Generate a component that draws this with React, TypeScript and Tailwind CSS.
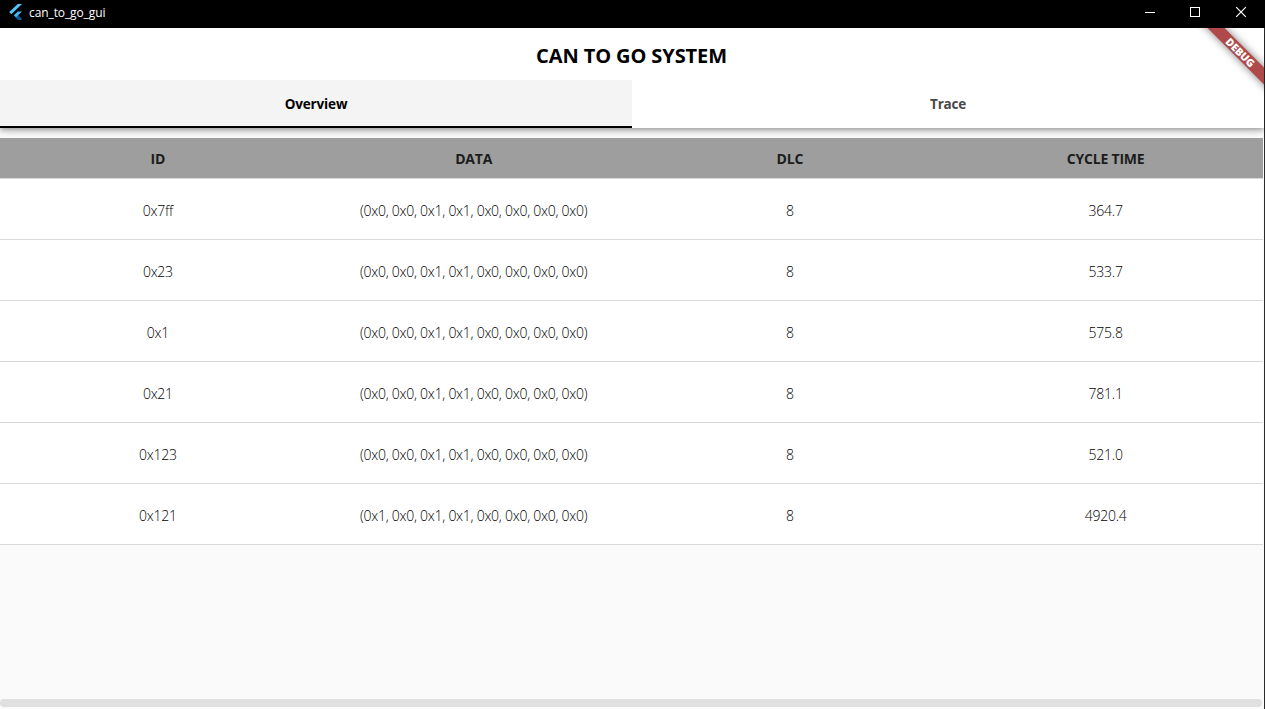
const rows = [
  { id: '0x7ff', data: '(0x0, 0x0, 0x1, 0x1, 0x0, 0x0, 0x0, 0x0)', dlc: '8', cycle: '364.7' },
  { id: '0x23', data: '(0x0, 0x0, 0x1, 0x1, 0x0, 0x0, 0x0, 0x0)', dlc: '8', cycle: '533.7' },
  { id: '0x1', data: '(0x0, 0x0, 0x1, 0x1, 0x0, 0x0, 0x0, 0x0)', dlc: '8', cycle: '575.8' },
  { id: '0x21', data: '(0x0, 0x0, 0x1, 0x1, 0x0, 0x0, 0x0, 0x0)', dlc: '8', cycle: '781.1' },
  { id: '0x123', data: '(0x0, 0x0, 0x1, 0x1, 0x0, 0x0, 0x0, 0x0)', dlc: '8', cycle: '521.0' },
  { id: '0x121', data: '(0x1, 0x0, 0x1, 0x1, 0x0, 0x0, 0x0, 0x0)', dlc: '8', cycle: '4920.4' },
];

function FlutterLogo() {
  return (
    <svg width="13" height="16" viewBox="0 0 13 16" className="ml-[9px]">
      <path d="M8.8 0H13L2.3 10.2L0.2 8.1Z" fill="#54c5f8" />
      <path d="M8.8 7.4H13L9.1 11.3L13 15.4H8.8L4.8 11.3Z" fill="#45b5ee" />
      <path d="M6.9 13.4L9.1 11.3L13 15.4H8.8Z" fill="#01579b" />
    </svg>
  );
}

function TitleBar() {
  return (
    <header className="flex h-7 shrink-0 items-center bg-black text-white">
      <div className="flex flex-1 items-center pb-1">
        <FlutterLogo />
        <span className="ml-[7px] mt-0.5 text-[12px] leading-4 tracking-[-0.1px]">can_to_go_gui</span>
      </div>
      <div className="flex h-7">
        <svg width="140" height="28" viewBox="0 0 140 28" fill="none" stroke="#fff">
          <path d="M20 12.5H30" />
          <rect x="65.5" y="7.5" width="9" height="9" />
          <path d="M111.2 7.2L120.8 16.8M120.8 7.2L111.2 16.8" strokeWidth="1.2" />
        </svg>
      </div>
    </header>
  );
}

function DebugBanner() {
  return (
    <div className="pointer-events-none absolute right-0 top-0 z-20 h-28 w-28 overflow-hidden">
      <div className="absolute left-[28px] top-[18px] flex h-3 w-[120px] rotate-45 items-center justify-center bg-[#b04a4a] shadow-[0_0_8px_rgba(0,0,0,0.5)]">
        <span className="pl-px text-[10.5px] font-black leading-none tracking-[-0.1px] text-white">DEBUG</span>
      </div>
    </div>
  );
}

export default function App() {
  return (
    <div className="flex h-[709px] w-[1265px] flex-col overflow-hidden bg-[#fafafa] font-['Open_Sans','Noto_Sans',sans-serif]">
      <TitleBar />
      <div className="relative flex min-h-0 flex-1 flex-col border-r border-[#2b2b2b]">
        <DebugBanner />
        <div className="relative shrink-0 bg-white shadow-[0_2px_4px_-1px_rgba(0,0,0,0.2),0_4px_5px_rgba(0,0,0,0.14),0_1px_10px_rgba(0,0,0,0.12)]">
          <h1 className="flex h-[52px] items-center justify-center pb-px pr-px pt-[5px] text-[20px] font-bold leading-none tracking-[-0.1px] text-black">
            CAN TO GO SYSTEM
          </h1>
          <nav className="flex h-12 text-[13.5px] leading-none">
            <button className="flex-1 border-b-2 border-black bg-[#f4f4f4] pt-1 font-bold tracking-[-0.15px] text-black">Overview</button>
            <button className="flex-1 border-b-2 border-transparent pt-1 font-bold tracking-[-0.25px] text-[#484848]">Trace</button>
          </nav>
        </div>
        <div className="relative mr-px mt-[10px] shrink-0">
          <div className="grid h-10 grid-cols-4 items-center bg-[#9e9e9e] pt-0.5 text-center text-[14px] font-bold leading-none text-[#1c1c1c]">
            <span>ID</span>
            <span className="tracking-[-0.2px]">DATA</span>
            <span className="pl-px tracking-[-0.2px]">DLC</span>
            <span className="pl-px tracking-[-0.2px]">CYCLE TIME</span>
          </div>
          {rows.map((row) => (
            <div
              key={row.id}
              className="grid h-[61px] grid-cols-4 items-center border-t border-[#dadada] bg-white pt-[3px] text-center text-[14px] font-light leading-none text-black"
            >
              <span className="tracking-[-0.25px]">{row.id}</span>
              <span className="tracking-[-0.26px]">{row.data}</span>
              <span className="pl-px">{row.dlc}</span>
              <span className="pl-px tracking-[-0.25px]">{row.cycle}</span>
            </div>
          ))}
          <div className="h-px bg-[#dadada]" />
        </div>
        <div className="mb-0.5 mr-[2px] mt-auto h-2 shrink-0 rounded-full bg-[#e0e0e0]" />
      </div>
    </div>
  );
}
